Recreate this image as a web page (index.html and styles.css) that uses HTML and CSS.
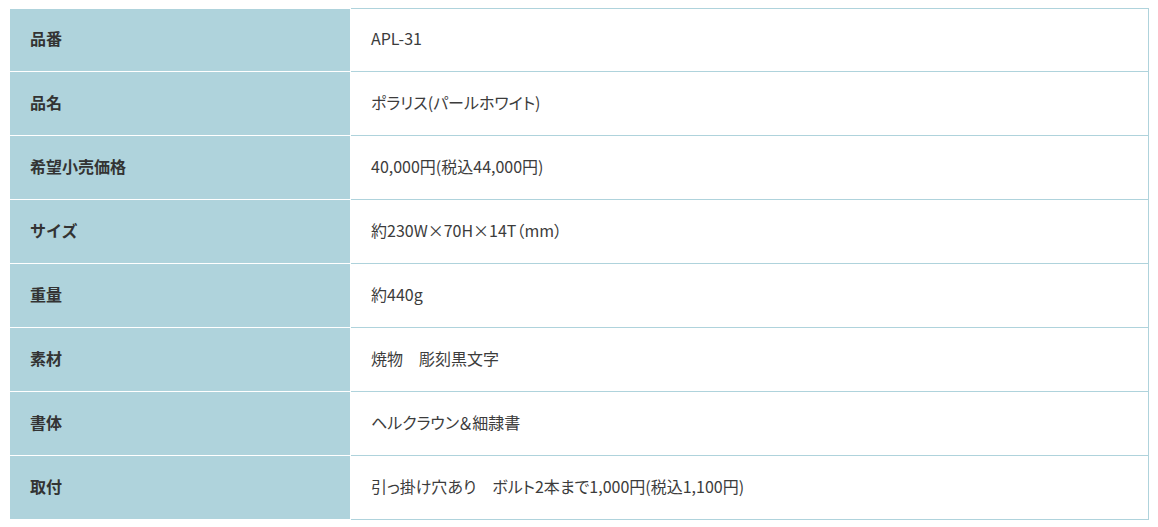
FILE: index.html
```html
<!DOCTYPE html>
<html lang="ja">
<head>
<meta charset="utf-8">
<link rel="stylesheet" href="styles.css">
</head>
<body>
<table class="spec">
  <tbody>
    <tr class="first"><th>品番</th><td>APL-31</td></tr>
    <tr><th>品名</th><td>ポラリス(パールホワイト)</td></tr>
    <tr><th>希望小売価格</th><td>40,000円(税込44,000円)</td></tr>
    <tr><th>サイズ</th><td>約230W×70H×14T（mm）</td></tr>
    <tr><th>重量</th><td>約440g</td></tr>
    <tr><th>素材</th><td>焼物　彫刻黒文字</td></tr>
    <tr><th>書体</th><td>ヘルクラウン＆細隷書</td></tr>
    <tr><th>取付</th><td>引っ掛け穴あり　ボルト2本まで1,000円(税込1,100円)</td></tr>
  </tbody>
</table>
</body>
</html>
```
FILE: styles.css
```css
html, body {
  margin: 0;
  padding: 0;
  background: #ffffff;
}
body {
  padding: 8px 9px 0 10px;
  font-family: "Noto Sans CJK JP", "Noto Sans", sans-serif;
  color: #333333;
}
.spec {
  width: 1139px;
  border-collapse: separate;
  border-spacing: 0;
  table-layout: fixed;
}
.spec th,
.spec td {
  padding: 19px 20px 21px;
  line-height: 23px;
  font-size: 16px;
  text-align: left;
  vertical-align: middle;
}
.spec th {
  width: 300px;
  background: #afd3dc;
  font-weight: 700;
  color: #333333;
  border-right: 1px solid #ffffff;
  border-bottom: 1px solid #ffffff;
}
.spec td {
  font-weight: 400;
  color: #3c3c3c;
  font-feature-settings: "palt" 1;
  border-right: 1px solid #afd3dc;
  border-bottom: 1px solid #afd3dc;
}
.spec .first th {
  border-top: 1px solid #ffffff;
  padding-top: 18px;
}
.spec .first td {
  border-top: 1px solid #afd3dc;
  padding-top: 18px;
}
```
